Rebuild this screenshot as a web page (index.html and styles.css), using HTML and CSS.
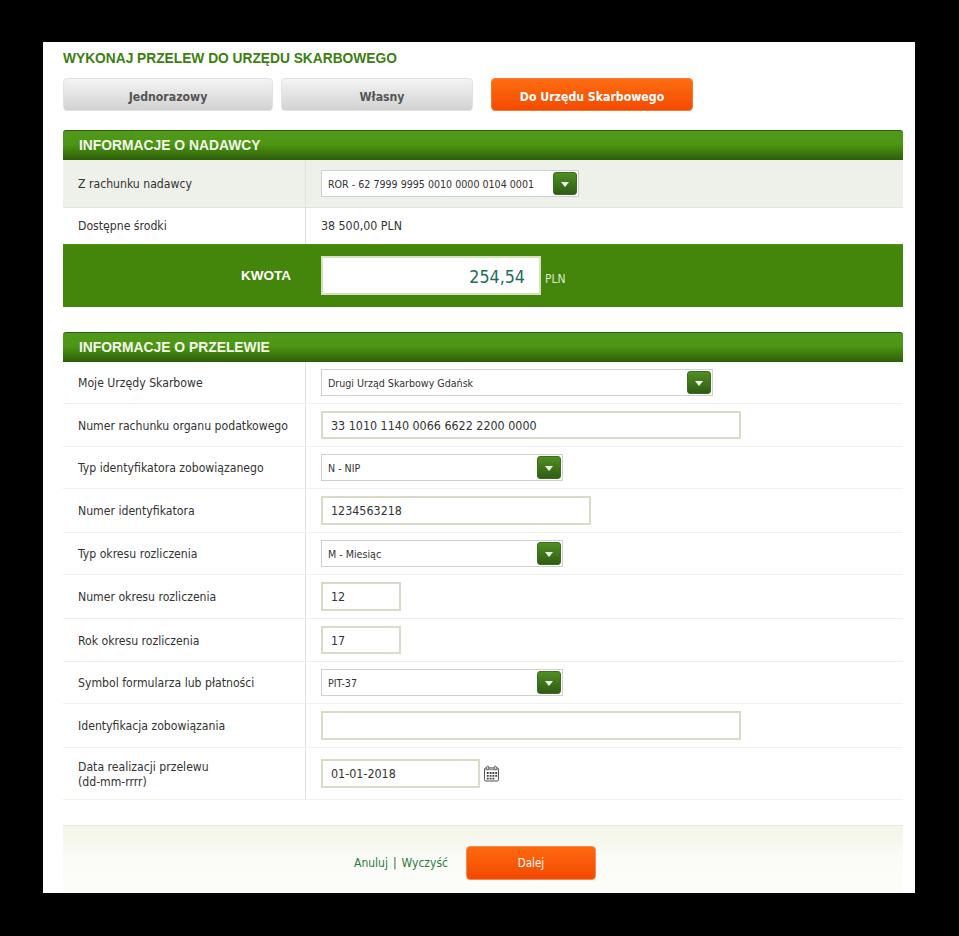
FILE: index.html
```html
<!DOCTYPE html>
<html lang="pl">
<head>
    <meta charset="UTF-8">
    <meta name="viewport" content="width=device-width, initial-scale=1.0">
    <title>Przelew do Urzędu Skarbowego</title>
    <link rel="stylesheet" href="styles.css">
</head>
<body>

    <div class="panel">
        <h1 class="page-title">WYKONAJ PRZELEW DO URZĘDU SKARBOWEGO</h1>

        <div class="tabs">
            <a href="#" class="tab tab-one">Jednorazowy</a>
            <a href="#" class="tab tab-two">Własny</a>
            <a href="#" class="tab tab-three active">Do Urzędu Skarbowego</a>
        </div>

        <h2 class="section-head">INFORMACJE O NADAWCY</h2>
        <div class="row row-shaded h-48">
            <div class="label">Z rachunku nadawcy</div>
            <div class="value">
                <div class="select select-m">
                    <span>ROR - 62 7999 9995 0010 0000 0104 0001</span>
                    <i class="arrow"></i>
                </div>
            </div>
        </div>
        <div class="row row-last h-36">
            <div class="label">Dostępne środki</div>
            <div class="value">38 500,00 PLN</div>
        </div>
        <div class="amount-bar">
            <div class="amount-label">KWOTA</div>
            <input class="amount-input" type="text" value="254,54">
            <span class="amount-currency">PLN</span>
        </div>

        <h2 class="section-head second">INFORMACJE O PRZELEWIE</h2>
        <div class="row h-42">
            <div class="label">Moje Urzędy Skarbowe</div>
            <div class="value">
                <div class="select select-l">
                    <span>Drugi Urząd Skarbowy Gdańsk</span>
                    <i class="arrow"></i>
                </div>
            </div>
        </div>
        <div class="row h-43">
            <div class="label">Numer rachunku organu podatkowego</div>
            <div class="value"><input class="field field-short field-xl" type="text" value="33 1010 1140 0066 6622 2200 0000"></div>
        </div>
        <div class="row h-42">
            <div class="label">Typ identyfikatora zobowiązanego</div>
            <div class="value">
                <div class="select select-s">
                    <span>N - NIP</span>
                    <i class="arrow"></i>
                </div>
            </div>
        </div>
        <div class="row h-44">
            <div class="label">Numer identyfikatora</div>
            <div class="value"><input class="field field-m" type="text" value="1234563218"></div>
        </div>
        <div class="row h-42">
            <div class="label">Typ okresu rozliczenia</div>
            <div class="value">
                <div class="select select-s">
                    <span>M - Miesiąc</span>
                    <i class="arrow"></i>
                </div>
            </div>
        </div>
        <div class="row h-44">
            <div class="label">Numer okresu rozliczenia</div>
            <div class="value"><input class="field field-xs" type="text" value="12"></div>
        </div>
        <div class="row h-43">
            <div class="label">Rok okresu rozliczenia</div>
            <div class="value"><input class="field field-short field-xs" type="text" value="17"></div>
        </div>
        <div class="row h-42">
            <div class="label">Symbol formularza lub płatności</div>
            <div class="value">
                <div class="select select-s">
                    <span>PIT-37</span>
                    <i class="arrow"></i>
                </div>
            </div>
        </div>
        <div class="row h-44">
            <div class="label">Identyfikacja zobowiązania</div>
            <div class="value"><input class="field field-xl" type="text" value=""></div>
        </div>
        <div class="row h-52">
            <div class="label">Data realizacji przelewu<br>(dd-mm-rrrr)</div>
            <div class="value date-value">
                <input class="field field-date" type="text" value="01-01-2018">
                <svg class="calendar" width="15" height="17" viewBox="0 0 16 17">
                    <rect x="0.5" y="2.5" width="15" height="14" rx="1.5" fill="#fff" stroke="#444"/>
                    <rect x="1" y="3" width="14" height="2" fill="#999"/>
                    <rect x="3" y="0.5" width="2" height="4" rx="1" fill="#fff" stroke="#444" stroke-width="0.8"/>
                    <rect x="11" y="0.5" width="2" height="4" rx="1" fill="#fff" stroke="#444" stroke-width="0.8"/>
                    <path d="M3 7h2v2H3zM6 7h2v2H6zM9 7h2v2H9zM12 7h2v2h-2zM3 10h2v2H3zM6 10h2v2H6zM9 10h2v2H9zM12 10h2v2h-2zM3 13h2v2H3zM6 13h2v2H6zM9 13h2v2H9z" fill="#444"/>
                </svg>
            </div>
        </div>

        <div class="footer-bar">
            <a href="#" class="link">Anuluj</a>
            <span class="sep">|</span>
            <a href="#" class="link">Wyczyść</a>
            <button class="next-btn">Dalej</button>
        </div>
    </div>

</body>
</html>
```

FILE: styles.css
```css
* {
    margin: 0;
    padding: 0;
    box-sizing: border-box;
}

body {
    background: #000;
    font-family: "DejaVu Sans Condensed", "DejaVu Sans", sans-serif;
    font-size: 12.3px;
    color: #333;
    height: 936px;
    overflow: hidden;
    padding: 42px 44px 43px 43px;
}

.panel {
    background: #fff;
    height: 851px;
    padding: 0 12px 0 20px;
    overflow: hidden;
}

.page-title {
    font-family: "Liberation Sans", Arial, sans-serif;
    font-size: 13.75px;
    font-weight: bold;
    line-height: 16px;
    color: #3c7f10;
    padding-top: 9px;
}

/* Tabs */
.tabs {
    display: flex;
    gap: 8px;
    margin-top: 11px;
}

.tab {
    height: 33px;
    line-height: 33px;
    padding-top: 2px;
    text-align: center;
    text-decoration: none;
    font-size: 12.2px;
    font-weight: bold;
    color: #555;
    background: linear-gradient(to bottom, #f4f4f4, #d2d2d2);
    border: 1px solid #e2e2e2;
    border-radius: 4px;
}

.tab-one { width: 210px; }
.tab-two { width: 192px; padding-left: 10px; }
.tab-three { width: 202px; margin-left: 10px; }

.tab.active {
    color: #fff;
    background: linear-gradient(to bottom, #ff6d12, #f44a00);
    border-color: #f27a30;
}

/* Sections */
.section-head {
    font-family: "Liberation Sans", Arial, sans-serif;
    font-size: 13.85px;
    font-weight: bold;
    color: #f2f7ea;
    height: 30px;
    line-height: 29px;
    margin-top: 19px;
    padding-left: 16px;
    border-top: 1px solid #2b5c10;
    border-radius: 3px 3px 0 0;
    background: linear-gradient(to bottom, #50991a 0%, #4e9614 45%, #2c5e08 100%);
}

.section-head.second {
    margin-top: 25px;
}

.row {
    display: flex;
    border-bottom: 1px solid #f0f1ec;
}

.row-shaded {
    background: #eef1ea;
    border-bottom-color: #e3e6dd;
}

.row-last {
    border-bottom: 0;
}

.h-36 { height: 36px; }
.h-42 { height: 42px; }
.h-43 { height: 43px; }
.h-44 { height: 44px; }
.h-48 { height: 48px; }
.h-52 { height: 52px; }

.label {
    width: 243px;
    padding: 2px 0 0 15px;
    font-size: 12.15px;
    line-height: 15px;
    display: flex;
    align-items: center;
    border-right: 1px solid #e0e2db;
    flex-shrink: 0;
}

.row-last .label {
    padding-top: 0;
}

.value {
    flex: 1;
    display: flex;
    align-items: center;
    padding-left: 15px;
}

/* Dropdowns */
.select {
    height: 27px;
    display: flex;
    align-items: center;
    justify-content: space-between;
    padding: 0 1px 0 6px;
    background: #fff;
    border: 1px solid #d0d0d0;
    font-size: 10.6px;
    white-space: nowrap;
}

.select-s { width: 242px; }
.select-m { width: 258px; }
.select-l { width: 392px; }

.arrow {
    width: 24px;
    height: 23px;
    position: relative;
    border-radius: 3px;
    border: 1px solid #3d6b22;
    background: linear-gradient(to bottom, #4f8f22, #2f5c14);
}

.arrow::after {
    content: "";
    position: absolute;
    left: 7px;
    top: 9px;
    border-left: 4px solid transparent;
    border-right: 4px solid transparent;
    border-top: 5px solid #f4f7ee;
}

/* Inputs */
.field {
    height: 29px;
    padding: 0 8px;
    border: 2px solid #d8dbc8;
    font-family: inherit;
    font-size: 12.4px;
    color: #333;
    background: #fff;
}

.field-short { height: 28px; }
.field-xs { width: 80px; }
.field-m { width: 270px; }
.field-xl { width: 420px; }
.field-date { width: 159px; }

.date-value {
    gap: 4px;
}

.calendar {
    flex-shrink: 0;
}

/* Amount bar */
.amount-bar {
    height: 63px;
    display: flex;
    align-items: center;
    background: #44850b;
    border-top: 1px solid #4f9214;
}

.amount-label {
    width: 228px;
    text-align: right;
    font-family: "Liberation Sans", Arial, sans-serif;
    font-size: 13.5px;
    font-weight: bold;
    color: #fff;
    margin-top: -2px;
}

.amount-input {
    width: 220px;
    height: 39px;
    margin: -2px 0 0 30px;
    padding: 3px 14px 0;
    border: 2px solid #d5e2c0;
    text-align: right;
    font-family: inherit;
    font-size: 17.7px;
    color: #1e6e5a;
    background: #fff;
}

.amount-currency {
    margin: 5px 0 0 4px;
    font-size: 12px;
    color: #dbe9c8;
}

/* Footer */
.footer-bar {
    height: 68px;
    margin-top: 25px;
    padding: 20px 0 0 291px;
    display: flex;
    align-items: flex-start;
    font-size: 12px;
    background: linear-gradient(to bottom, #f2f5e6, #fbfcf8 50%, #fcfdf9);
    border-top: 1px solid #e9ecd9;
}

.link {
    color: #2c7a40;
    text-decoration: none;
    line-height: 34px;
}

.sep {
    line-height: 34px;
    margin: 0 5px;
    color: #2c5a3a;
}

.next-btn {
    width: 130px;
    height: 34px;
    margin-left: 18px;
    font-family: inherit;
    font-size: 11.5px;
    color: #fff;
    background: linear-gradient(to bottom, #ff6a10, #f34800);
    border: 1px solid #f58a4c;
    border-radius: 4px;
    cursor: pointer;
}
```
